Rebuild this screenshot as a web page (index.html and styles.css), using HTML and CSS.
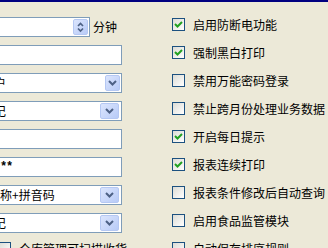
FILE: index.html
```html
<!DOCTYPE html>
<html lang="zh-CN">
<head>
    <meta charset="UTF-8">
    <meta name="viewport" content="width=device-width, initial-scale=1.0">
    <title>系统参数设置</title>
    <link rel="stylesheet" href="styles.css">
</head>
<body>
    <div class="titlebar"></div>
    <div class="form">
        <div class="col-left">
            <div class="row row-spin">
                <div class="field spin">
                    <span class="value"></span>
                    <span class="spin-btn">
                        <svg width="15" height="16" viewBox="0 0 15 16">
                            <polyline points="5,7 7.5,4.5 10,7" fill="none" stroke="#4d6185" stroke-width="1.7"/>
                            <polyline points="5,9.5 7.5,12 10,9.5" fill="none" stroke="#4d6185" stroke-width="1.7"/>
                        </svg>
                    </span>
                </div>
                <span class="unit">分钟</span>
            </div>
            <div class="row"><div class="field"><span class="value"></span></div></div>
            <div class="row">
                <div class="field combo">
                    <span class="value">客户</span>
                    <span class="drop-btn narrow">
                        <svg width="9" height="6" viewBox="0 0 9 6"><polyline points="1,1 4.5,4.5 8,1" fill="none" stroke="#4d6185" stroke-width="2"/></svg>
                    </span>
                </div>
            </div>
            <div class="row">
                <div class="field combo">
                    <span class="value">登记</span>
                    <span class="drop-btn">
                        <svg width="9" height="6" viewBox="0 0 9 6"><polyline points="1,1 4.5,4.5 8,1" fill="none" stroke="#4d6185" stroke-width="2"/></svg>
                    </span>
                </div>
            </div>
            <div class="row"><div class="field"><span class="value"></span></div></div>
            <div class="row"><div class="field"><span class="value password">*****</span></div></div>
            <div class="row">
                <div class="field combo short">
                    <span class="value">名称+拼音码</span>
                    <span class="drop-btn">
                        <svg width="9" height="6" viewBox="0 0 9 6"><polyline points="1,1 4.5,4.5 8,1" fill="none" stroke="#4d6185" stroke-width="2"/></svg>
                    </span>
                </div>
            </div>
            <div class="row">
                <div class="field combo">
                    <span class="value">登记</span>
                    <span class="drop-btn">
                        <svg width="9" height="6" viewBox="0 0 9 6"><polyline points="1,1 4.5,4.5 8,1" fill="none" stroke="#4d6185" stroke-width="2"/></svg>
                    </span>
                </div>
            </div>
            <label class="check-row check-left"><span class="box"></span>仓库管理可扫描收货</label>
        </div>

        <div class="col-right">
            <label class="check-row"><span class="box on"><svg width="11" height="11" viewBox="0 0 11 11"><polyline points="2,5 4.5,7.5 9,3" fill="none" stroke="#21a121" stroke-width="2"/></svg></span>启用防断电功能</label>
            <label class="check-row"><span class="box on"><svg width="11" height="11" viewBox="0 0 11 11"><polyline points="2,5 4.5,7.5 9,3" fill="none" stroke="#21a121" stroke-width="2"/></svg></span>强制黑白打印</label>
            <label class="check-row"><span class="box"></span>禁用万能密码登录</label>
            <label class="check-row"><span class="box"></span>禁止跨月份处理业务数据</label>
            <label class="check-row"><span class="box on"><svg width="11" height="11" viewBox="0 0 11 11"><polyline points="2,5 4.5,7.5 9,3" fill="none" stroke="#21a121" stroke-width="2"/></svg></span>开启每日提示</label>
            <label class="check-row"><span class="box on"><svg width="11" height="11" viewBox="0 0 11 11"><polyline points="2,5 4.5,7.5 9,3" fill="none" stroke="#21a121" stroke-width="2"/></svg></span>报表连续打印</label>
            <label class="check-row"><span class="box"></span>报表条件修改后自动查询</label>
            <label class="check-row"><span class="box"></span>启用食品监管模块</label>
            <label class="check-row"><span class="box"></span>自动保存排序规则</label>
        </div>
    </div>
</body>
</html>
```

FILE: styles.css
```css
* {
    box-sizing: border-box;
}

body {
    margin: 0;
    background: #ece9d8;
    font-family: "Noto Sans CJK SC", "Noto Sans", sans-serif;
    font-size: 12px;
    color: #000;
    overflow: hidden;
}

.titlebar {
    height: 2px;
    background: #000080;
}

.form {
    display: flex;
    padding-top: 15px;
}

/* 左侧输入框列 */
.col-left {
    flex: none;
    width: 152px;
    margin-left: -30px;
}

.row {
    height: 28px;
    display: flex;
    justify-content: flex-end;
    align-items: flex-start;
}

.row-spin {
    justify-content: flex-start;
    gap: 3px;
}

.field {
    width: 143px;
    height: 20px;
    background: #fff;
    border: 1px solid #7f9db9;
    padding: 0 1px 0 2px;
    display: flex;
    align-items: center;
    overflow: hidden;
    white-space: nowrap;
}

.field.short {
    width: 137px;
}

.field.spin {
    width: 120px;
}

.value {
    flex: 1;
    line-height: 18px;
    overflow: hidden;
}

.password {
    font-family: "Liberation Mono", monospace;
    font-weight: bold;
    letter-spacing: -1.2px;
}

.unit {
    line-height: 19px;
}

.spin-btn {
    width: 15px;
    height: 16px;
    border: 1px solid #b5c8f3;
    border-radius: 2px;
    background: linear-gradient(135deg, #dbe5fd, #b8cbf7);
    display: flex;
}

.spin-btn svg {
    margin: -1px;
}

.drop-btn {
    width: 19px;
    height: 16px;
    margin-right: 1px;
    border: 1px solid #b5c8f3;
    border-radius: 2px;
    background: linear-gradient(135deg, #dbe5fd, #b8cbf7);
    display: flex;
    align-items: center;
    justify-content: center;
}

.drop-btn.narrow {
    width: 15px;
    margin-right: 0;
}

/* 右侧复选框列 */
.col-right {
    flex: none;
    margin-left: 50px;
    padding-top: 1px;
}

.check-row {
    height: 28px;
    display: flex;
    align-items: flex-start;
    gap: 8px;
    line-height: 13px;
    white-space: nowrap;
}

.check-left {
    margin-top: 1px;
    padding-left: 28px;
}

.box {
    flex: none;
    width: 13px;
    height: 13px;
    border: 1px solid #1c5180;
    background: linear-gradient(135deg, #dcdcd5, #ffffff);
    display: flex;
}
```
